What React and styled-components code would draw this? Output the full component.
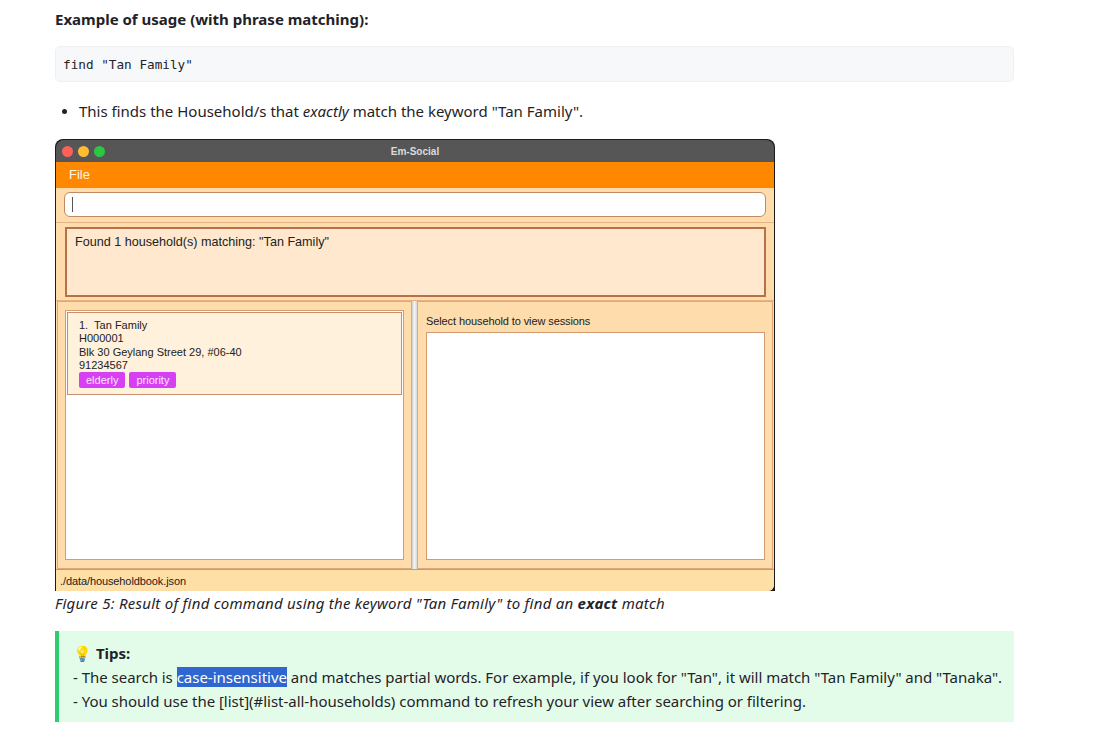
import styled, { createGlobalStyle } from "styled-components";

const GlobalStyle = createGlobalStyle`
  body {
    margin: 0;
    background: #ffffff;
    font-family: "Noto Sans", "Open Sans", sans-serif;
    color: #1f2328;
  }
`;

const Page = styled.div`
  width: 959px;
  padding: 8px 0 0 55px;
`;

const Heading = styled.h4`
  margin: 0;
  font-size: 15px;
  font-weight: 700;
  line-height: 22px;
  color: #1f2328;
`;

const CodeBlock = styled.pre`
  margin: 16px 0 0 0;
  height: 36px;
  box-sizing: border-box;
  padding: 1px 7px 0 7px;
  display: flex;
  align-items: center;
  background: #f6f8fa;
  border: 1px solid #eef0f3;
  border-radius: 5px;
  font-family: "DejaVu Sans Mono", "Liberation Mono", monospace;
  font-size: 12.7px;
  color: #1f2328;
`;

const Bullets = styled.ul`
  margin: 17px 0 0 0;
  padding: 0 0 0 24px;
  font-size: 15px;
  line-height: 24px;
  li::marker {
    font-size: 14px;
  }
`;

const Shot = styled.div`
  margin-top: 16px;
  width: 720px;
  height: 452px;
  box-sizing: border-box;
  display: flex;
  flex-direction: column;
  background: #1c1c1c;
  border-radius: 8px 8px 0 0;
  overflow: hidden;
  font-family: "Liberation Sans", Arial, sans-serif;
  color: #222;
`;

const TitleBar = styled.div`
  height: 22px;
  flex: none;
  display: flex;
  align-items: center;
  position: relative;
  padding-left: 6px;
  gap: 5px;
  background: #565656;
  border-radius: 8px 8px 0 0;
  margin: 1px 1px 0 1px;
`;

const Light = styled.span`
  width: 11px;
  height: 11px;
  border-radius: 50%;
  background: ${(p) => p.$c};
`;

const TitleText = styled.span`
  position: absolute;
  left: 0;
  right: 0;
  text-align: center;
  font-size: 10px;
  font-weight: 700;
  color: #dcdcdc;
  pointer-events: none;
`;

const Body = styled.div`
  flex: 1;
  display: flex;
  flex-direction: column;
  margin: 0 1px 0 1px;
  background: #fedcab;
  border-radius: 0 0 6px 0;
  overflow: hidden;
`;

const MenuBar = styled.div`
  height: 26px;
  flex: none;
  display: flex;
  align-items: center;
  padding: 0 0 1px 13px;
  box-sizing: border-box;
  background: #ff8800;
  font-size: 13px;
  color: #fff6e8;
`;

const CommandRow = styled.div`
  flex: none;
  padding: 4px 8px 5px 8px;
  border-bottom: 1px solid #e6b385;
`;

const CommandInput = styled.div`
  height: 25px;
  box-sizing: border-box;
  background: #fff;
  border: 1px solid #c08a62;
  border-radius: 6px;
  display: flex;
  align-items: center;
  padding-left: 7px;
`;

const Caret = styled.span`
  width: 1px;
  height: 15px;
  background: #555;
`;

const ResultRow = styled.div`
  flex: none;
  padding: 4px 8px 3px 9px;
  border-bottom: 1px solid #e6b385;
`;

const ResultBox = styled.div`
  height: 70px;
  box-sizing: border-box;
  background: #ffe8cd;
  border: 2px solid #b8704a;
  padding: 6px 8px;
  font-size: 12.6px;
`;

const Split = styled.div`
  flex: 1;
  display: flex;
  padding: 0 1px;
`;

const Pane = styled.div`
  flex: 1;
  display: flex;
  flex-direction: column;
  border: 1px solid #e0a878;
  padding: ${(p) => p.$pad};
`;

const Divider = styled.div`
  width: 5px;
  flex: none;
  background: linear-gradient(to right, #cfcfcf, #f4f4f4 50%, #d6d6d6);
`;

const ListBox = styled.div`
  flex: 1;
  background: #fff;
  border: 1px solid #d49a70;
  padding: 1px;
`;

const Card = styled.div`
  background: #fff1dc;
  border: 1px solid #c8906a;
  padding: 6px 11px 6px 11px;
  font-size: 11px;
  line-height: 13.3px;
`;

const Tags = styled.div`
  display: flex;
  gap: 4px;
`;

const Tag = styled.span`
  background: #d73ff3;
  color: #fbe6ff;
  border-radius: 2px;
  padding: 1px 7px;
  font-size: 11px;
  line-height: 14px;
`;

const PaneLabel = styled.div`
  font-size: 11px;
  letter-spacing: -0.1px;
  padding: 5px 0 5px 0;
`;

const SessionBox = styled.div`
  flex: 1;
  background: #fff;
  border: 1px solid #d49a70;
`;

const StatusBar = styled.div`
  height: 21px;
  flex: none;
  display: flex;
  align-items: center;
  padding-left: 4px;
  background: #fedfa6;
  border-top: 1px solid #c99a75;
  font-size: 11px;
  letter-spacing: -0.1px;
`;

const Caption = styled.div`
  font-size: 15px;
  font-style: italic;
  line-height: 24px;
  letter-spacing: 0.25px;
  color: #1f2328;
`;

const Tips = styled.div`
  margin-top: 16px;
  background: #e3fcea;
  border-left: 4px solid #2ecc71;
  padding: 10px 4px 9px 14px;
  font-size: 15px;
  line-height: 24px;
`;

const TipsTitle = styled.div`
  font-weight: 700;
`;

const TipLine = styled.div`
  white-space: nowrap;
  letter-spacing: -0.02px;
`;

const Highlight = styled.span`
  background: #2f66cf;
  color: #fff;
`;

export default function App() {
  return (
    <>
      <GlobalStyle />
      <Page>
        <Heading>Example of usage (with phrase matching):</Heading>
        <CodeBlock>find "Tan Family"</CodeBlock>
        <Bullets>
          <li>
            This finds the Household/s that <em>exactly</em> match the keyword
            "Tan Family".
          </li>
        </Bullets>
        <Shot>
          <TitleBar>
            <Light $c="#fe5f57" />
            <Light $c="#febc2e" />
            <Light $c="#28c840" />
            <TitleText>Em-Social</TitleText>
          </TitleBar>
          <Body>
            <MenuBar>File</MenuBar>
            <CommandRow>
              <CommandInput>
                <Caret />
              </CommandInput>
            </CommandRow>
            <ResultRow>
              <ResultBox>Found 1 household(s) matching: "Tan Family"</ResultBox>
            </ResultRow>
            <Split>
              <Pane $pad="8px 7px 8px 7px">
                <ListBox>
                  <Card>
                    <div>1.&nbsp; Tan Family</div>
                    <div>H000001</div>
                    <div>Blk 30 Geylang Street 29, #06-40</div>
                    <div>91234567</div>
                    <Tags>
                      <Tag>elderly</Tag>
                      <Tag>priority</Tag>
                    </Tags>
                  </Card>
                </ListBox>
              </Pane>
              <Divider />
              <Pane $pad="8px 7px 8px 8px">
                <PaneLabel>Select household to view sessions</PaneLabel>
                <SessionBox />
              </Pane>
            </Split>
            <StatusBar>./data/householdbook.json</StatusBar>
          </Body>
        </Shot>
        <Caption>
          Figure 5: Result of find command using the keyword "Tan Family" to
          find an <strong>exact</strong> match
        </Caption>
        <Tips>
          <TipsTitle>💡 Tips:</TipsTitle>
          <TipLine>
            - The search is <Highlight>case-insensitive</Highlight> and matches
            partial words. For example, if you look for "Tan", it will match
            "Tan Family" and "Tanaka".
          </TipLine>
          <TipLine>
            - You should use the [list](#list-all-households) command to
            refresh your view after searching or filtering.
          </TipLine>
        </Tips>
      </Page>
    </>
  );
}
